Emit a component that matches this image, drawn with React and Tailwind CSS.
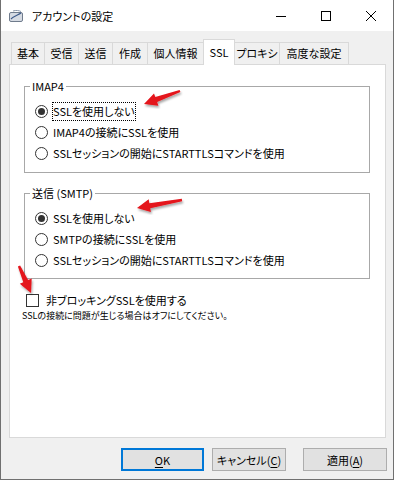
import React from 'react';

const font = "font-['Noto_Sans_CJK_JP','Noto_Sans',sans-serif] [font-feature-settings:'palt']";

const tabs = [
  { label: '基本', cls: 'w-[33px] border-l' },
  { label: '受信', cls: 'w-[34px] border-l' },
  { label: '送信', cls: 'w-[34px] border-l' },
  { label: '作成', cls: 'w-[35px] border-l' },
  { label: '個人情報', cls: 'w-[56px] border-l' },
  { label: 'SSL', cls: 'w-[32px] border-l border-r', active: true },
  { label: 'プロキシ', cls: 'w-[44px]' },
  { label: '高度な設定', cls: 'w-[70px] border-l border-r' },
];

function arrowPoints([tx, ty], [px, py]) {
  const dx = px - tx, dy = py - ty, len = Math.hypot(dx, dy);
  const ux = dx / len, uy = dy / len, nx = -uy, ny = ux;
  const L = 13, W = 6.5, S = 2.6, T = 1.2;
  const bx = px - ux * L, by = py - uy * L;
  const pts = [
    [tx + nx * T, ty + ny * T], [bx + nx * S, by + ny * S], [bx + nx * W, by + ny * W],
    [px, py],
    [bx - nx * W, by - ny * W], [bx - nx * S, by - ny * S], [tx - nx * T, ty - ny * T],
  ];
  return pts.map(p => p.map(v => v.toFixed(1)).join(',')).join(' ');
}

const arrows = [
  [[179, 91], [143, 104]],
  [[181, 200], [136, 208]],
  [[18, 266], [30, 293]],
];

function Radio({ checked, label, focused }) {
  return (
    <div className="flex items-center h-[21px] gap-[4px]">
      <span className="w-[13px] h-[13px] rounded-full border border-[#333] bg-white flex items-center justify-center shrink-0">
        {checked && <span className="w-[7px] h-[7px] rounded-full bg-[#333]" />}
      </span>
      <span className={"border leading-[17px] whitespace-nowrap " + (focused ? 'border-dotted border-black' : 'border-transparent')}>{label}</span>
    </div>
  );
}

function Group({ title, items, pb }) {
  return (
    <fieldset className={"w-[346px] border border-[#a8a8a8] " + pb}>
      <legend className="ml-[5px] px-[2px] leading-[16px]">{title}</legend>
      <div className="pl-[10px] pt-[7px]">
        {items.map((it, i) => <Radio key={i} {...it} />)}
      </div>
    </fieldset>
  );
}

export default function App() {
  return (
    <div className={"relative w-[394px] h-[480px] flex flex-col bg-[#f0f0f0] border-x border-b border-[#707070] text-[11px] text-black overflow-hidden " + font}>
      {/* Title bar */}
      <div className="h-[31px] shrink-0 bg-white flex items-center pl-[8px]">
        <svg width="14" height="12" viewBox="0 0 14 12">
          <rect x="0.5" y="2.5" width="13" height="9" rx="1.5" fill="#d6dbe3" stroke="#6f7b8c" />
          <path d="M2 9 C5 6, 9 5, 12 3" stroke="#3d5a8a" strokeWidth="1.2" fill="none" />
          <path d="M4 1 C7 0, 10 0.5, 12 1.5" stroke="#8a96a8" fill="none" />
        </svg>
        <span className="ml-[9px] leading-[16px]">アカウントの設定</span>
        <div className="ml-auto flex h-full">
          <div className="w-[45px] flex items-center justify-center">
            <svg width="10" height="10" viewBox="0 0 10 10"><path d="M0 5.5H10" stroke="#000" /></svg>
          </div>
          <div className="w-[45px] flex items-center justify-center">
            <svg width="10" height="10" viewBox="0 0 10 10"><rect x="0.5" y="0.5" width="9" height="9" stroke="#000" fill="none" /></svg>
          </div>
          <div className="w-[45px] flex items-center justify-center">
            <svg width="10" height="10" viewBox="0 0 10 10"><path d="M0 0L10 10M10 0L0 10" stroke="#000" /></svg>
          </div>
        </div>
      </div>

      {/* Tabs */}
      <div className="flex items-end mt-[8px] pl-[10px]">
        {tabs.map(t => (
          <div key={t.label}
            className={t.cls + " border-t border-[#d9d9d9] flex items-center justify-center whitespace-nowrap " +
              (t.active ? 'relative z-10 h-[26px] -mb-px bg-white' : 'h-[22px] bg-[#f0f0f0]')}>
            {t.label}
          </div>
        ))}
      </div>

      {/* Panel */}
      <div className="ml-[8px] w-[377px] h-[374px] shrink-0 border border-[#d9d9d9] bg-white pt-[13px] pl-[14px]">
        <Group title="IMAP4" pb="pb-[8px]" items={[
          { label: 'SSLを使用しない', checked: true, focused: true },
          { label: 'IMAP4の接続にSSLを使用' },
          { label: 'SSLセッションの開始にSTARTTLSコマンドを使用' },
        ]} />
        <div className="mt-[12px]">
          <Group title="送信 (SMTP)" pb="pb-[7px]" items={[
            { label: 'SSLを使用しない', checked: true },
            { label: 'SMTPの接続にSSLを使用' },
            { label: 'SSLセッションの開始にSTARTTLSコマンドを使用' },
          ]} />
        </div>
        <div className="mt-[12px] flex items-center h-[18px] pl-[2px] gap-[7px]">
          <span className="w-[13px] h-[13px] border border-[#333] bg-white shrink-0" />
          <span className="leading-[16px]">非ブロッキングSSLを使用する</span>
        </div>
        <p className="-ml-[2px] text-[9px] leading-[14px]">SSLの接続に問題が生じる場合はオフにしてください。</p>
      </div>

      {/* Buttons */}
      <div className="flex mt-[10px]">
        <button className="ml-[120px] w-[83px] h-[23px] bg-[#e1e1e1] border-2 border-[#0078d7] flex items-center justify-center leading-[16px]">
          <span><u className="underline-offset-2">O</u>K</span>
        </button>
        <button className="ml-[8px] w-[74px] h-[23px] bg-[#e1e1e1] border border-[#adadad] flex items-center justify-center leading-[16px]">
          <span>キャンセル(<u className="underline-offset-2">C</u>)</span>
        </button>
        <button className="ml-[17px] w-[84px] h-[23px] bg-[#e1e1e1] border border-[#adadad] flex items-center justify-center leading-[16px]">
          <span>適用(<u className="underline-offset-2">A</u>)</span>
        </button>
      </div>

      {/* Annotation arrows */}
      <svg className="absolute inset-0 pointer-events-none" width="394" height="480" viewBox="0 0 394 480">
        <defs>
          <filter id="sh" x="-20%" y="-20%" width="140%" height="140%">
            <feDropShadow dx="1" dy="2" stdDeviation="1" floodColor="#000" floodOpacity="0.35" />
          </filter>
        </defs>
        {arrows.map(([t, p], i) => (
          <polygon key={i} points={arrowPoints(t, p)} fill="#e4141b" filter="url(#sh)" />
        ))}
      </svg>
    </div>
  );
}
